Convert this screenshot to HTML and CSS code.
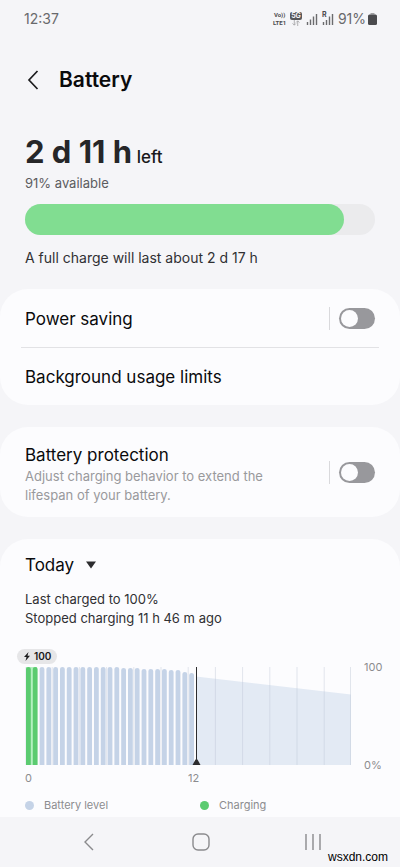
FILE: index.html
```
<!DOCTYPE html>
<html lang="en">
<head>
<meta charset="utf-8">
<meta name="viewport" content="width=device-width, initial-scale=1">
<title>Battery</title>
<link rel="stylesheet" href="styles.css">
</head>
<body>
<div class="screen">
  <header class="status">
    <span>12:37</span>
    <div class="status-icons">
      <span class="volte"><span>Vo))</span><span>LTE1</span></span>
      <span class="net"><b>5G</b>
        <svg width="10" height="6" viewBox="0 0 10 7"><path d="M3 0v6M1 4l2 2 2-2M7 7V1M5 3l2-2 2 2" fill="none" stroke="#a5a5a7"/></svg>
      </span>
      <svg width="12" height="12" viewBox="0 0 12 12"><path d="M1.500 9v3M4.500 6.500v5.500M7.500 3.500v8.500M10.500 1v11" stroke="#6b6b6e" stroke-width="1.400"/></svg>
      <span class="roaming"><b>R</b>
        <svg width="12" height="12" viewBox="0 0 12 12"><path d="M1.500 9v3M4.500 7v5M7.500 3.500v8.500M10.500 1v11" stroke="#6b6b6e" stroke-width="1.400"/></svg>
      </span>
      <span class="level">91%<svg width="9" height="12" viewBox="0 0 9 12"><path d="M2.500 0h4v1.500h-4z" fill="#a0a0a2"/><rect y="1.500" width="9" height="10.500" rx="1.500" fill="#4b4b4e"/></svg></span>
    </div>
  </header>

  <div class="titlebar">
    <button class="icon-btn" aria-label="Back"><svg width="12" height="20" viewBox="0 0 12 20"><path d="M10.500 1 2 10l8.500 9" fill="none" stroke="#1c1c1e" stroke-width="1.700"/></svg></button>
    <h1>Battery</h1>
  </div>

  <section class="summary">
    <p class="remaining"><strong>2 d 11 h</strong> left</p>
    <p class="available">91% available</p>
    <div class="meter"><div class="meter-fill" style="width:91%"></div></div>
    <p class="full">A full charge will last about 2 d 17 h</p>
  </section>

  <main>
    <section class="card">
      <div class="row">
        <label for="saving">Power saving</label>
        <span class="control"><input class="switch" type="checkbox" role="switch" id="saving"></span>
      </div>
      <a class="row row-link" href="#limits">Background usage limits</a>
    </section>

    <section class="card">
      <div class="row row-tall">
        <label for="protect">Battery protection<small>Adjust charging behavior to extend the lifespan of your battery.</small></label>
        <span class="control"><input class="switch" type="checkbox" role="switch" id="protect"></span>
      </div>
    </section>

    <section class="card usage">
      <button class="day">Today <svg width="12" height="8" viewBox="0 0 12 8"><path d="M1 .5h10L6 7.500z" fill="#2c2c2e"/></svg></button>
      <p class="charged">Last charged to 100%<br>Stopped charging 11 h 46 m ago</p>
      <span class="pill"><svg width="6" height="9" viewBox="0 0 6 9"><path d="M4.500 0 0 5h2.500L1.500 9 6 3.700H3.500z" fill="#1c1c1e"/></svg>100</span>
      <div class="chart">
        <svg class="plot" viewBox="0 0 326 98" preserveAspectRatio="none" role="img" aria-label="Battery level by hour" id="plot"></svg>
        <div class="scale"><span>100</span><span>0%</span></div>
        <div class="hours"><span>0</span><span>12</span></div>
      </div>
      <ul class="legend">
        <li><i class="dot"></i>Battery level</li>
        <li><i class="dot dot-green"></i>Charging</li>
      </ul>
    </section>
  </main>

  <nav class="nav">
    <button class="icon-btn" aria-label="Back"><svg width="12" height="18" viewBox="0 0 12 18"><path d="M10 1 2 9l8 8" fill="none" stroke="#8a8a8d" stroke-width="1.400"/></svg></button>
    <button class="icon-btn" aria-label="Home"><svg width="18" height="18" viewBox="0 0 18 18"><rect x="1" y="1" width="16" height="16" rx="5" fill="none" stroke="#8a8a8d" stroke-width="1.400"/></svg></button>
    <button class="icon-btn" aria-label="Recent apps"><svg width="16" height="16" viewBox="0 0 16 16"><path d="M1 0v16M8 0v16M15 0v16" stroke="#8a8a8d" stroke-width="1.400"/></svg></button>
    <span class="mark">wsxdn.com</span>
  </nav>
</div>
<script src="chart.js"></script>
</body>
</html>
```
FILE: chart.js
```
// Draws the hourly battery bars, the forecast area and the current-time marker.
const tops = [0,0,0,0,0,0,0,0,0,0,0,0,0,0,1,1,1,2,2,2,2,3,3,5,6];
const step = 6.8;
let out = '<path d="M171 9.500 326 27.500V98H171z" fill="#e3eaf4"/>';
for (let i = 0; i <= 12; i++) {
  const x = Math.min(i * 27.2, 325.5);
  out += `<path d="M${x} 0V98" stroke="#b9c3d3" stroke-opacity=".5" stroke-width=".8"/>`;
}
out += '<path d="M1 0h11v98H1z" fill="#b4f0c0"/>';
tops.forEach((top, i) => {
  const x = i * step + 1;
  const fill = i < 2 ? '#5bcb70' : '#c5d3e7';
  out += `<path d="M${x} 98V${top + 2}q0-2 2.400-2t2.400 2V98z" fill="${fill}"/>`;
});
out += '<path d="M171.500 0V98" stroke="#2c2c2e"/><path d="M167.500 98h8l-3-5.500h-2z" fill="#2c2c2e"/>';
document.getElementById('plot').innerHTML = out;
```
FILE: styles.css
```
* { box-sizing: border-box; }
body {
  margin: 0;
  background: #f5f5f8;
  color: #19191b;
  font-family: Inter, Roboto, sans-serif;
  font-size: 14px;
  line-height: 20px;
}
h1, p, ul { margin: 0; padding: 0; }
button { border: 0; padding: 0; background: none; font: inherit; color: inherit; }
svg { display: block; flex: none; }

.screen { height: 100vh; display: flex; flex-direction: column; overflow: hidden; }

.status {
  flex: none;
  display: flex;
  justify-content: space-between;
  align-items: center;
  height: 38px;
  padding: 0 23px 0 24px;
  color: #69696c;
}
.status-icons { display: flex; align-items: center; gap: 4px; }
.volte, .net { display: flex; flex-direction: column; align-items: center; }
.volte { font-family: Roboto, sans-serif; font-size: 6px; line-height: 8px; font-weight: 700; color: #4b4b4e; }
.net b { padding: 0 1px; border-radius: 2px; background: #58585b; color: #f5f5f8; font-size: 7px; line-height: 8px; }
.roaming { position: relative; }
.roaming b { position: absolute; left: 0; top: -2px; font-size: 7px; line-height: 8px; color: #4b4b4e; }
.level { display: flex; align-items: center; gap: 2px; }

.titlebar { flex: none; display: flex; align-items: center; gap: 20px; height: 84px; padding: 0 27px; }
.icon-btn { display: grid; place-items: center; }
h1 { font-size: 21px; line-height: 28px; font-weight: 600; color: #0a0a0c; }

.summary { flex: none; padding: 12px 25px 22px; }
.remaining { font-size: 17px; line-height: 36px; font-weight: 500; }
.remaining strong { font-size: 31px; font-weight: 700; color: #262628; }
.available { font-size: 13px; line-height: 18px; margin-top: -1px; color: #5c5c5f; }
.meter { height: 31px; margin: 12px 0 13px; border-radius: 16px; background: #ebebed; }
.meter-fill { height: 100%; border-radius: 16px; background: #81dd91; }
.full { line-height: 19px; color: #303033; }

main { flex: 1; min-height: 0; overflow: hidden; display: flex; flex-direction: column; gap: 22px; }
.card { flex: none; border-radius: 28px; background: #fcfcfe; }
.row {
  display: flex;
  align-items: center;
  justify-content: space-between;
  height: 58px;
  margin: 0 21px;
  padding: 1px 4px 0;
  font-size: 17px;
  line-height: 22px;
  color: #0a0a0c;
  text-decoration: none;
}
.row-link { border-top: 1px solid #e2e2e5; }
.row-tall { height: 90px; }
.row-tall label { padding-top: 3px; }
.row small { display: block; max-width: 260px; margin-top: 1px; font-size: 13px; line-height: 19px; color: #99999c; }
.control { display: flex; align-items: center; height: 23px; padding-left: 9px; border-left: 1px solid #d9d9dc; }
.switch { appearance: none; width: 36px; height: 21px; margin: 0; padding: 2px; border-radius: 11px; background: #98989c; }
.switch::before { content: ""; display: block; width: 17px; height: 17px; border-radius: 50%; background: #fcfcfe; }
.switch:checked { background: #5bcb70; padding-left: 17px; }

.usage { flex: 1 0 auto; padding: 15px 25px 0; border-radius: 28px 28px 0 0; }
.day { display: flex; align-items: center; gap: 11px; font-size: 17px; line-height: 22px; color: #0a0a0c; }
.charged { margin-top: 14px; font-size: 13px; line-height: 19px; color: #303033; }
.pill {
  display: flex;
  align-items: center;
  gap: 4px;
  width: max-content;
  margin: 21px 0 3px -8px;
  padding: 0 6px 0 7px;
  border-radius: 8px;
  background: #e6e6e8;
  font-size: 10px;
  line-height: 15px;
  font-weight: 600;
}
.chart { display: grid; grid-template-columns: 1fr 24px; column-gap: 13px; margin-right: -13px; font-size: 11px; line-height: 14px; color: #8c8c8f; }
.plot { width: 100%; height: 98px; }
.scale { display: flex; flex-direction: column; justify-content: space-between; margin: -7px 0; }
.hours { display: grid; grid-template-columns: 1fr 1fr; padding-top: 6px; }
.legend { display: grid; grid-template-columns: 1fr 1fr; margin-top: 12px; list-style: none; font-size: 11px; line-height: 16px; color: #8c8c8f; }
.legend li { display: flex; align-items: center; gap: 10px; }
.dot { width: 9px; height: 9px; border-radius: 50%; background: #c5d3e7; }
.dot-green { background: #5bcb70; }

.nav {
  position: relative;
  flex: none;
  display: grid;
  grid-template-columns: repeat(3, 112px);
  justify-content: center;
  align-items: center;
  height: 50px;
  padding-left: 2px;
  background: #f5f5f8;
}
.mark { position: absolute; right: 12px; bottom: 0; font: 12px/20px "Liberation Sans", sans-serif; color: #000; }
```
